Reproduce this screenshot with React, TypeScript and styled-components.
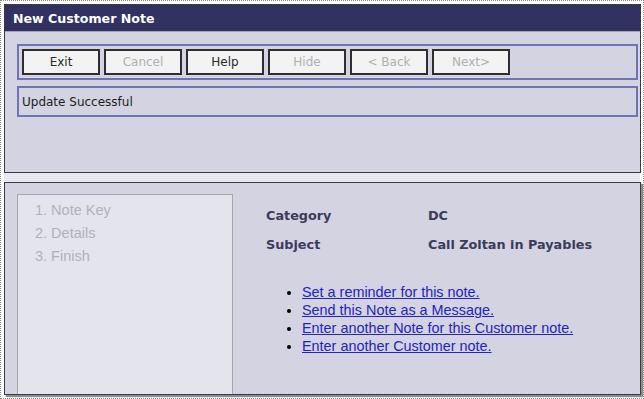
import React from 'react'
import styled, { createGlobalStyle } from 'styled-components'

const GlobalStyle = createGlobalStyle`
  html, body {
    margin: 0;
    padding: 0;
    background: #ffffff;
  }
  * {
    box-sizing: border-box;
  }
`

const Frame = styled.div`
  width: 644px;
  height: 399px;
  border: 1px dotted #8a8a8a;
  padding: 3px 2px 2px 3px;
  background: #ffffff;
  display: flex;
  flex-direction: column;
  font-family: "DejaVu Sans", Verdana, sans-serif;
`
const Window = styled.div`
  border: 1px solid #3a3a44;
  background: #d3d3e1;
`
const TopWindow = styled(Window)`
  height: 169px;
`
const TitleBar = styled.div`
  height: 27px;
  background: #313162;
  border-bottom: 1px solid #a4a4bc;
  color: #ffffff;
  font-weight: bold;
  font-size: 12.6px;
  display: flex;
  align-items: center;
  padding-left: 8px;
`
const TopBody = styled.div`
  padding: 12px 2px 0 12px;
`
const Toolbar = styled.div`
  display: flex;
  gap: 4px;
  padding: 3px;
  border: 2px solid #7272b6;
`
const Button = styled.button<{ $disabled?: boolean }>`
  width: 78px;
  height: 26px;
  background: #f3f3f3;
  border: 2px solid #2e2e2e;
  border-radius: 0;
  font-family: "DejaVu Sans", Verdana, sans-serif;
  font-size: 12px;
  color: ${p => (p.$disabled ? '#b0b0b0' : '#2a2a2a')};
  padding: 0;
  cursor: default;
`
const MessageBox = styled.div`
  margin-top: 6px;
  height: 31px;
  border: 2px solid #7272b6;
  display: flex;
  align-items: center;
  padding-left: 3px;
  font-size: 12px;
  color: #1e1e1e;
`
const Gap = styled.div`
  height: 9px;
  background: #e7e7f1;
  margin-right: 1px;
`
const LowerWindow = styled(Window)`
  flex: 1;
  display: flex;
  padding: 11px 0 0 12px;
  box-shadow: 2px 2px 1px rgba(0, 0, 0, 0.45);
  margin-bottom: 1px;
`
const StepsBox = styled.div`
  width: 216px;
  background: #e4e4ed;
  border: 1px solid #a6a6ae;
  border-bottom: none;
  padding: 4px 0 0 17px;
  font-family: "Liberation Sans", Arial, sans-serif;
  font-size: 14.5px;
  line-height: 23px;
  color: #b2b2b6;
`
const Step = styled.div``
const Content = styled.div`
  flex: 1;
  padding: 14px 0 0 33px;
`
const Details = styled.div`
  display: grid;
  grid-template-columns: 162px auto;
  row-gap: 13px;
  font-size: 12.8px;
  font-weight: bold;
  line-height: 16px;
  color: #3b3b5c;
`
const Links = styled.ul`
  margin: 30px 0 0;
  padding-left: 36px;
  font-family: "Liberation Sans", Arial, sans-serif;
  font-size: 14.4px;
  line-height: 18px;
  color: #000;
`
const LinkItem = styled.li`
  a {
    color: #2323c2;
    text-decoration: underline;
  }
`

const buttons = [
  { label: 'Exit', disabled: false },
  { label: 'Cancel', disabled: true },
  { label: 'Help', disabled: false },
  { label: 'Hide', disabled: true },
  { label: '< Back', disabled: true },
  { label: 'Next>', disabled: true },
]

const links = [
  'Set a reminder for this note.',
  'Send this Note as a Message.',
  'Enter another Note for this Customer note.',
  'Enter another Customer note.',
]

const App = (): JSX.Element => (
  <>
    <GlobalStyle />
    <Frame>
      <TopWindow>
        <TitleBar>New Customer Note</TitleBar>
        <TopBody>
          <Toolbar>
            {buttons.map(b => (
              <Button key={b.label} $disabled={b.disabled}>
                {b.label}
              </Button>
            ))}
          </Toolbar>
          <MessageBox>Update Successful</MessageBox>
        </TopBody>
      </TopWindow>
      <Gap />
      <LowerWindow>
        <StepsBox>
          <Step>1. Note Key</Step>
          <Step>2. Details</Step>
          <Step>3. Finish</Step>
        </StepsBox>
        <Content>
          <Details>
            <span>Category</span>
            <span>DC</span>
            <span>Subject</span>
            <span>Call Zoltan in Payables</span>
          </Details>
          <Links>
            {links.map(l => (
              <LinkItem key={l}>
                <a href="#">{l}</a>
              </LinkItem>
            ))}
          </Links>
        </Content>
      </LowerWindow>
    </Frame>
  </>
)

export default App
